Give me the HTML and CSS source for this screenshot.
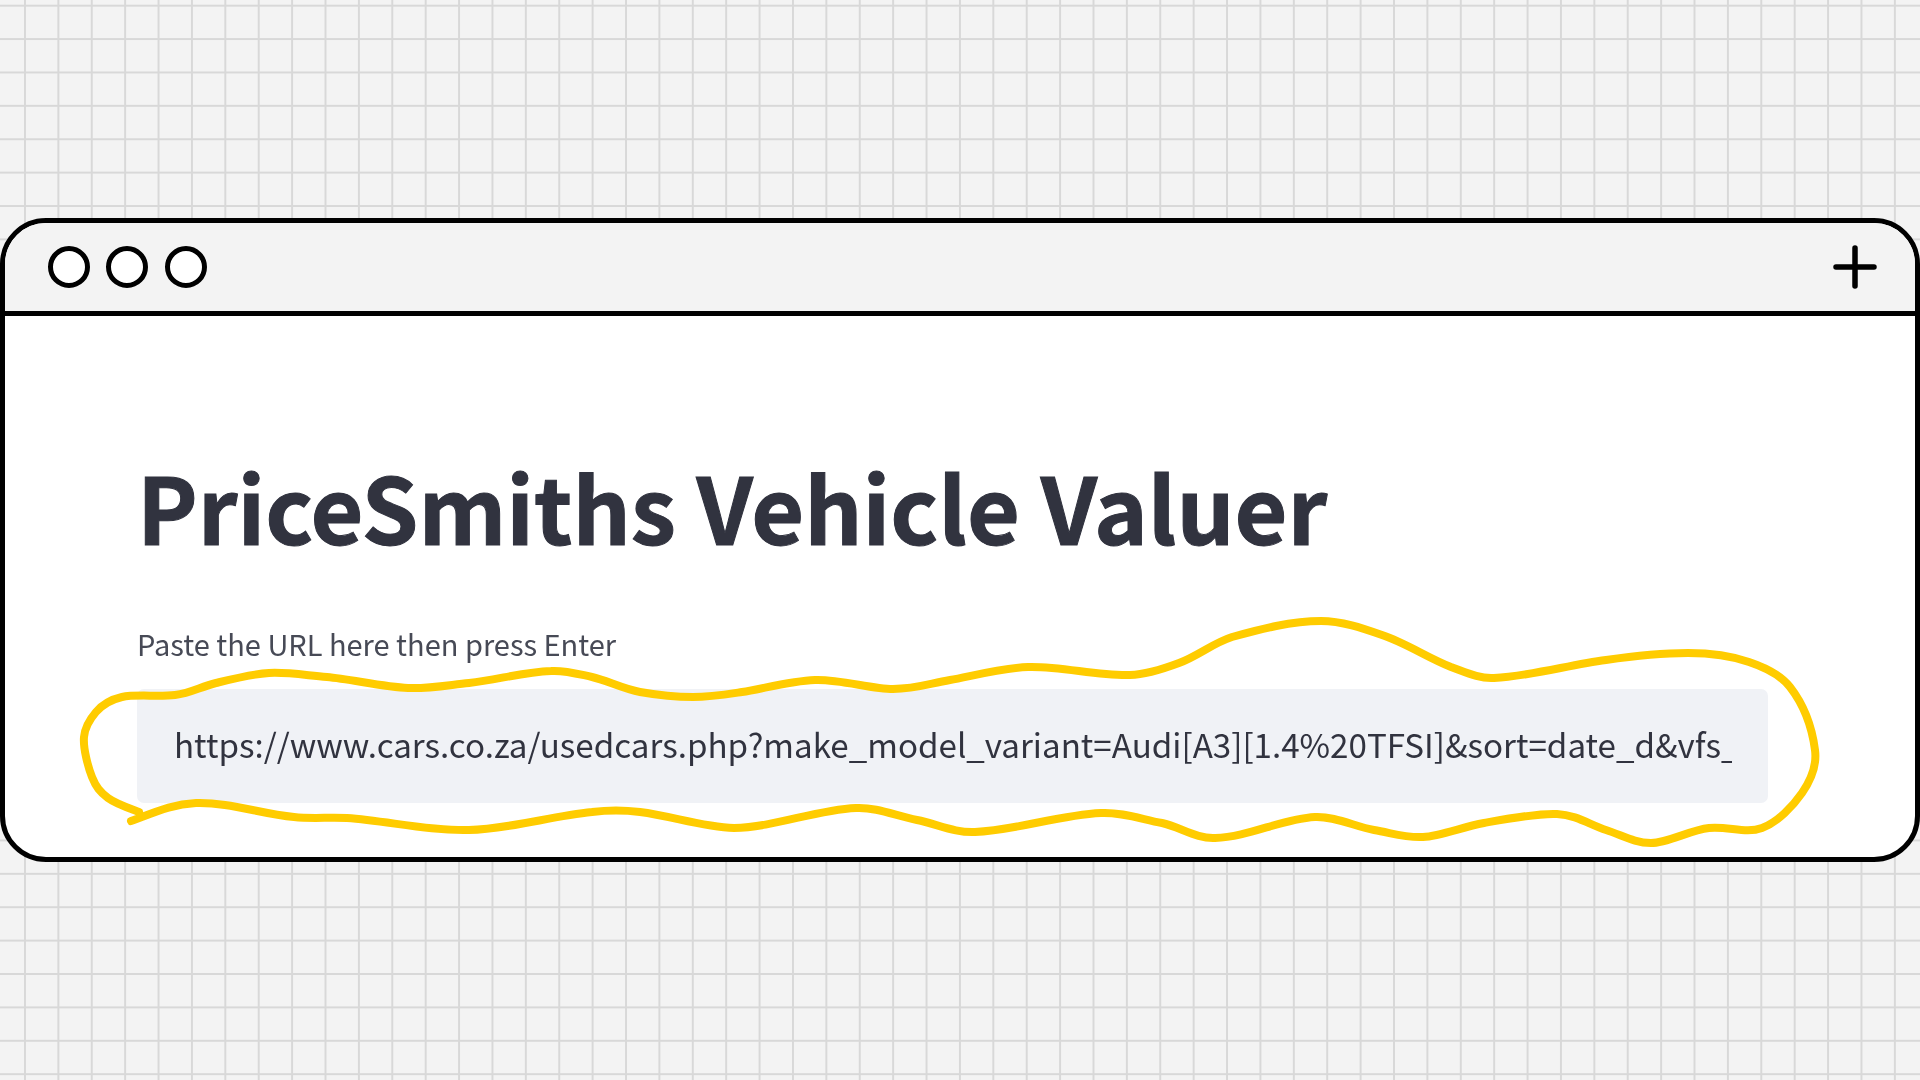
FILE: index.html
```html
<!DOCTYPE html>
<html lang="en">
<head>
<meta charset="utf-8">
<title>PriceSmiths Vehicle Valuer</title>
<link rel="stylesheet" href="styles.css">
</head>
<body>
<main class="stage">
  <section class="window">
    <header class="titlebar">
      <div class="dots">
        <span class="dot"></span>
        <span class="dot"></span>
        <span class="dot"></span>
      </div>
      <svg class="plus" viewBox="0 0 44 44" aria-hidden="true">
        <path d="M3 22H41M22 3V41"/>
      </svg>
    </header>
    <div class="content">
      <h1 class="title">PriceSmiths Vehicle Valuer</h1>
      <label class="label" for="url">Paste the URL here then press Enter</label>
      <input class="url" id="url" type="text" value="https://www.cars.co.za/usedcars.php?make_model_variant=Audi[A3][1.4%20TFSI]&amp;sort=date_d&amp;vfs_area=">
    </div>
  </section>
  <svg class="scribble" viewBox="0 0 1920 1080" aria-hidden="true">
    <path d="M139 812C134 810 116 804 108 798S96 787 92 777S83 748 84 737S90 719 96 712S109 700 122 697S159 697 175 695S200 687 216 683S251 674 269 673S304 675 327 677S384 687 408 688C428 689 449 685 469 683C497 680 523 672 551 671C565 670 578 674 592 677S623 689 640 692S676 697 693 697S722 695 742 692S790 681 815 680S871 689 893 689S928 684 950 680S1002 668 1028 667C1062 666 1096 676 1130 675C1147 674.5 1163 669 1179 663C1198 656 1213 643 1232 637C1261 629 1291 621 1321 621C1342 621 1362 628 1382 635C1406 643 1428 658 1451 667C1465 672 1479 679 1494 678C1532 676 1568 665 1606 660C1633 656 1661 653 1688 653C1709 653 1729 655 1749 662C1764 667 1780 674 1790 687C1804 705 1812 727 1815 750C1817 765 1811 780 1802 793S1778 822 1762 828S1728 826 1709 828S1668 843 1651 843S1622 835 1606 830S1577 815 1557 814S1506 819 1484 823S1441 836 1423 837S1392 833 1374 830S1335 816 1315 817C1281 819 1249 837 1215 838C1197 839 1180 827 1162 823C1141 819 1122 812 1101 813C1059 815 1017 830 975 832C955 833 937 824 917 820C896 816 877 807 856 808C815 810 775 827 734 828C702 827 672 816 640 812C624 810 608 810 592 812C551 816 510 829 469 830C428 831 388 821 347 818C329 817 312 819 294 817C261 814 229 802 196 803C174 804 160 810 131 821"/>
  </svg>
</main>
</body>
</html>
```
FILE: styles.css
```css
* { box-sizing: border-box; }

html, body { margin: 0; height: 100%; }

body {
  background-color: #f3f3f3;
  background-image:
    linear-gradient(to right, #d8d8d8 2px, transparent 2px),
    linear-gradient(to bottom, #d8d8d8 2px, transparent 2px);
  background-size: 33.4px 33.4px;
  background-position: 24px 4.7px;
  overflow: hidden;
}

.stage {
  position: relative;
  height: 1080px;
  padding-top: 218px;
}

.window {
  height: 644px;
  background: #fff;
  border: 5.5px solid #000;
  border-radius: 46px;
  overflow: hidden;
}

.titlebar {
  display: flex;
  align-items: center;
  justify-content: space-between;
  height: 93px;
  padding: 0 38.5px 0 43px;
  background: #f3f3f3;
  border-bottom: 5.5px solid #000;
}

.dots { display: flex; gap: 16.3px; }

.dot {
  width: 42px;
  height: 42px;
  background: #fff;
  border: 5.5px solid #000;
  border-radius: 50%;
}

.plus { width: 44px; height: 44px; }

.plus path {
  fill: none;
  stroke: #000;
  stroke-width: 5.5;
  stroke-linecap: round;
}

.content {
  display: flex;
  flex-direction: column;
  padding: 138.5px 147px 0 132px;
  font-family: "Noto Sans CJK SC", "Source Sans Pro", "Noto Sans", sans-serif;
  color: #31333f;
  filter: blur(0.5px);
}

.title {
  margin: 0 0 68.5px 0;
  font-size: 91.2px;
  line-height: 100px;
  font-weight: 700;
  -webkit-text-stroke: 1px #31333f;
}

.label {
  margin-bottom: 26px;
  font-size: 29px;
  line-height: 40px;
  color: #474a56;
}

.url {
  width: 100%;
  height: 114px;
  padding: 0 36px 4px 37px;
  border: 0;
  border-radius: 7px;
  background: #f0f2f6;
  font: inherit;
  font-size: 33.15px;
  color: #31333f;
  outline: none;
}

.scribble {
  position: absolute;
  inset: 0;
  width: 1920px;
  height: 1080px;
  pointer-events: none;
}

.scribble path {
  fill: none;
  stroke: #ffcc00;
  stroke-width: 8;
  stroke-linecap: round;
  stroke-linejoin: round;
}
```
